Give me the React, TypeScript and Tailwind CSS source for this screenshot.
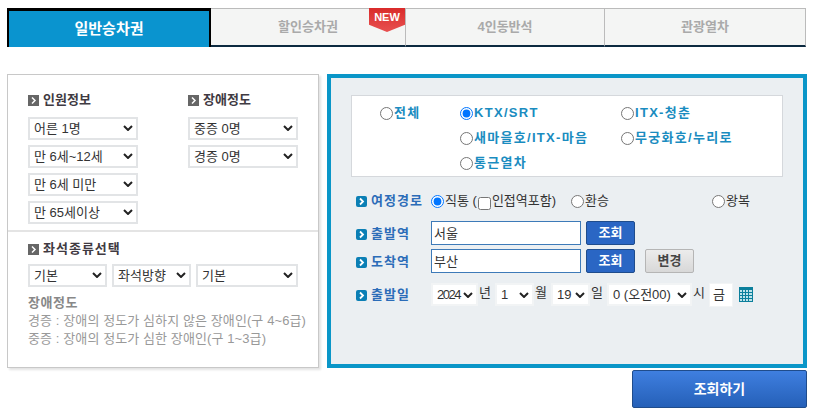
import { ReactNode } from 'react'

function Pick({ options, className, soft, tight }: { options: string; className: string; soft?: boolean; tight?: boolean }) {
  return (
    <span className={`relative block h-[23px] ${className}`}>
      <select
        className={`h-[23px] w-full appearance-none rounded-none border-2 bg-white pl-[4px] text-[13px] text-[#333] ${
          soft ? 'border-[#f2f4f5]' : 'border-[#e2e4e6]'
        } ${tight ? 'tracking-[-1.500px]' : ''}`}
        defaultValue={options}
      >
        <option>{options}</option>
      </select>
      <svg viewBox="0 0 10 6" className="pointer-events-none absolute top-[9px] right-[5px] h-[6px] w-[10px]">
        <path d="M1 1 5 5 9 1" fill="none" stroke="#222" strokeWidth="2" />
      </svg>
    </span>
  )
}

function GrayHead({ children, className = '' }: { children: ReactNode; className?: string }) {
  return (
    <div className={`flex items-center gap-[4px] text-[13px] leading-[16px] font-bold text-[#3f3a42] ${className}`}>
      <span className="flex h-[11px] w-[11px] items-center justify-center bg-[#666]">
        <svg viewBox="0 0 11 11" className="h-[11px] w-[11px]">
          <path d="M4 2.500 7 5.500 4 8.500" fill="none" stroke="#fff" strokeWidth="1.500" />
        </svg>
      </span>
      {children}
    </div>
  )
}

function BlueHead({ children, className = '' }: { children: ReactNode; className?: string }) {
  return (
    <div className={`flex w-[75px] items-center gap-[4px] text-[13px] font-bold tracking-[1px] text-[#2b6cb8] ${className}`}>
      <span className="flex h-[11px] w-[11px] items-center justify-center rounded-[2px] bg-[#0b7fb5]">
        <svg viewBox="0 0 11 11" className="h-[11px] w-[11px]">
          <path d="M4 2.500 7 5.500 4 8.500" fill="none" stroke="#fff" strokeWidth="1.800" />
        </svg>
      </span>
      {children}
    </div>
  )
}

function TrainRadio({ label, checked }: { label: string; checked?: boolean }) {
  return (
    <label className="flex h-[24px] items-center gap-[1px] text-[13px] font-bold tracking-[1.300px] text-[#1a8cc0]">
      <input type="radio" name="train" defaultChecked={checked} className="m-0 h-[13px] w-[13px]" />
      {label}
    </label>
  )
}

function Tab({ label, className }: { label: string; className: string }) {
  return (
    <div
      className={`flex h-[39px] items-center justify-center border-t border-r border-b-[2px] border-t-[#bbb] border-r-[#bbb] border-b-[#0c2a40] bg-[#f4f5f4] text-[13px] font-bold text-[#aaa] ${className}`}
    >
      {label}
    </div>
  )
}

export default function App() {
  return (
    <div
      className="h-[420px] w-[816px] overflow-hidden bg-white pt-[8px] pl-[7px]"
      style={{ fontFamily: '"Liberation Sans", "Noto Sans CJK KR", sans-serif' }}
    >
      <div className="relative flex w-[799px]">
        <div className="flex h-[39px] w-[204px] items-center justify-center border-x-[2px] border-t-[3px] border-black bg-[#0a94cf] text-[15px] font-bold text-white">
          일반승차권
        </div>
        <Tab label="할인승차권" className="w-[195px]" />
        <Tab label="4인동반석" className="w-[199px]" />
        <Tab label="관광열차" className="w-[201px]" />
        <div className="absolute top-0 left-[362px] flex h-[24px] w-[36px] justify-center bg-gradient-to-b from-[#d92a2a] to-[#e85050] pt-[3px] text-[11px] leading-[12px] font-bold text-white [clip-path:polygon(0_0,100%_0,100%_70%,50%_100%,0_70%)]">
          NEW
        </div>
      </div>

      <div className="mt-[27px] flex w-[800px] items-start gap-[8px]">
        <div className="h-[294px] w-[312px] border border-[#c8c8c8] shadow-[2px_2px_2px_#e4e4e4]">
          <div className="flex h-[157px] gap-[50px] border-b-2 border-[#e4e4e4] pt-[17px] pl-[20px]">
            <div className="flex flex-col gap-[5px]">
              <div className="mb-[3px]">
                <GrayHead>인원정보</GrayHead>
              </div>
              <Pick options="어른 1명" className="w-[110px]" />
              <Pick options="만 6세~12세" className="w-[110px]" />
              <Pick options="만 6세 미만" className="w-[110px]" />
              <Pick options="만 65세이상" className="w-[110px]" />
            </div>
            <div className="flex flex-col gap-[5px]">
              <div className="mb-[3px]">
                <GrayHead>장애정도</GrayHead>
              </div>
              <Pick options="중증 0명" className="w-[110px]" />
              <Pick options="경증 0명" className="w-[110px]" />
            </div>
          </div>
          <div className="pt-[9px] pl-[20px]">
            <GrayHead className="tracking-[1px]">좌석종류선택</GrayHead>
            <div className="mt-[6px] flex gap-[5px]">
              <Pick options="기본" className="w-[79px]" />
              <Pick options="좌석방향" className="w-[79px]" />
              <Pick options="기본" className="w-[102px]" />
            </div>
            <div className="mt-[8px] text-[13px] leading-[18px] font-bold tracking-[0.5px] text-[#888]">장애정도</div>
            <p className="text-[13px] leading-[18px] tracking-[0.1px] whitespace-nowrap text-[#999]">
              경증 : 장애의 정도가 심하지 않은 장애인(구 4~6급)
            </p>
            <p className="text-[13px] leading-[18px] tracking-[0.1px] whitespace-nowrap text-[#999]">
              중증 : 장애의 정도가 심한 장애인(구 1~3급)
            </p>
          </div>
        </div>

        <div className="h-[294px] w-[480px] border-[4px] border-[#0a96c8] bg-[#ebeff2] pt-[17px] pl-[20px]">
          <div className="grid h-[82px] w-[432px] grid-cols-[80px_161px_1fr] border border-[#d5d8dc] bg-white pt-[5px] pl-[28px]">
            <TrainRadio label="전체" />
            <TrainRadio label="KTX/SRT" checked />
            <TrainRadio label="ITX-청춘" />
            <span />
            <TrainRadio label="새마을호/ITX-마음" />
            <TrainRadio label="무궁화호/누리로" />
            <span />
            <TrainRadio label="통근열차" />
          </div>

          <div className="mt-[14px] flex h-[20px] items-center pl-[5px] text-[13px] text-[#333]">
            <BlueHead>여정경로</BlueHead>
            <label className="flex w-[140px] items-center gap-[1px] whitespace-nowrap">
              <input type="radio" name="route" defaultChecked className="m-0 h-[13px] w-[13px]" />
              직통&nbsp;(
              <input type="checkbox" className="m-0 mt-[4px] h-[13px] w-[13px]" />
              인접역포함)
            </label>
            <label className="flex w-[141px] items-center gap-[1px]">
              <input type="radio" name="route" className="m-0 h-[13px] w-[13px]" />
              환승
            </label>
            <label className="flex items-center gap-[1px]">
              <input type="radio" name="route" className="m-0 h-[13px] w-[13px]" />
              왕복
            </label>
          </div>

          <div className="mt-[10px] flex h-[24px] items-center pl-[5px]">
            <BlueHead className="mt-[2px]">출발역</BlueHead>
            <input
              defaultValue="서울"
              className="h-[24px] w-[150px] border border-[#3d7ab8] bg-white pb-[2px] pl-[2px] text-[13px] text-[#333]"
            />
            <button className="ml-[5px] h-[24px] w-[49px] rounded-[2px] border border-[#1f4c8c] bg-[#2a66c4] text-[13px] font-bold text-white">
              조회
            </button>
          </div>
          <div className="mt-[4px] flex h-[24px] items-center pl-[5px]">
            <BlueHead className="mt-[2px]">도착역</BlueHead>
            <input
              defaultValue="부산"
              className="h-[24px] w-[150px] border border-[#3d7ab8] bg-white pb-[2px] pl-[2px] text-[13px] text-[#333]"
            />
            <button className="ml-[5px] h-[24px] w-[49px] rounded-[2px] border border-[#1f4c8c] bg-[#2a66c4] text-[13px] font-bold text-white">
              조회
            </button>
            <button className="ml-[10px] h-[24px] w-[49px] rounded-[2px] border border-[#b5b5b5] bg-gradient-to-b from-[#ececec] to-[#d8d8d8] text-[13px] font-bold text-[#444]">
              변경
            </button>
          </div>

          <div className="mt-[10px] flex h-[23px] items-center pl-[5px] text-[13px] text-[#333]">
            <BlueHead className="mt-[1px]">출발일</BlueHead>
            <Pick options="2024" soft tight className="w-[47px]" />
            <span className="w-[17px] pb-[3px] pl-[1px]">년</span>
            <Pick options="1" soft className="w-[39px]" />
            <span className="w-[17px] pb-[3px] pl-[1px]">월</span>
            <Pick options="19" soft className="w-[39px]" />
            <span className="w-[17px] pb-[3px] pl-[1px]">일</span>
            <Pick options="0 (오전00)" soft className="w-[85px]" />
            <span className="w-[17px] pb-[3px] pl-[1px]">시</span>
            <input
              defaultValue="금"
              className="h-[24px] w-[24px] border border-[#f2f4f5] bg-white pb-[2px] pl-[3px] text-[13px] text-[#333]"
            />
            <svg viewBox="0 0 14 15" className="ml-[6px] h-[15px] w-[14px]">
              <rect width="14" height="15" fill="#0b7f9c" />
              <rect x="1" y="3" width="12" height="11" fill="#bfe3ea" />
              <path d="M3.500 3v11M6.500 3v11M9.500 3v11M1 5.500h12M1 8.500h12M1 11.500h12" stroke="#0b7f9c" strokeWidth="1" />
            </svg>
          </div>
        </div>
      </div>

      <div className="mt-[2px] flex w-[800px] justify-end">
        <button className="h-[38px] w-[175px] rounded-[2px] border border-[#1f4c8c] bg-gradient-to-b from-[#3f7fe0] to-[#2560b8] text-[14px] font-bold text-white">
          조회하기
        </button>
      </div>
    </div>
  )
}
